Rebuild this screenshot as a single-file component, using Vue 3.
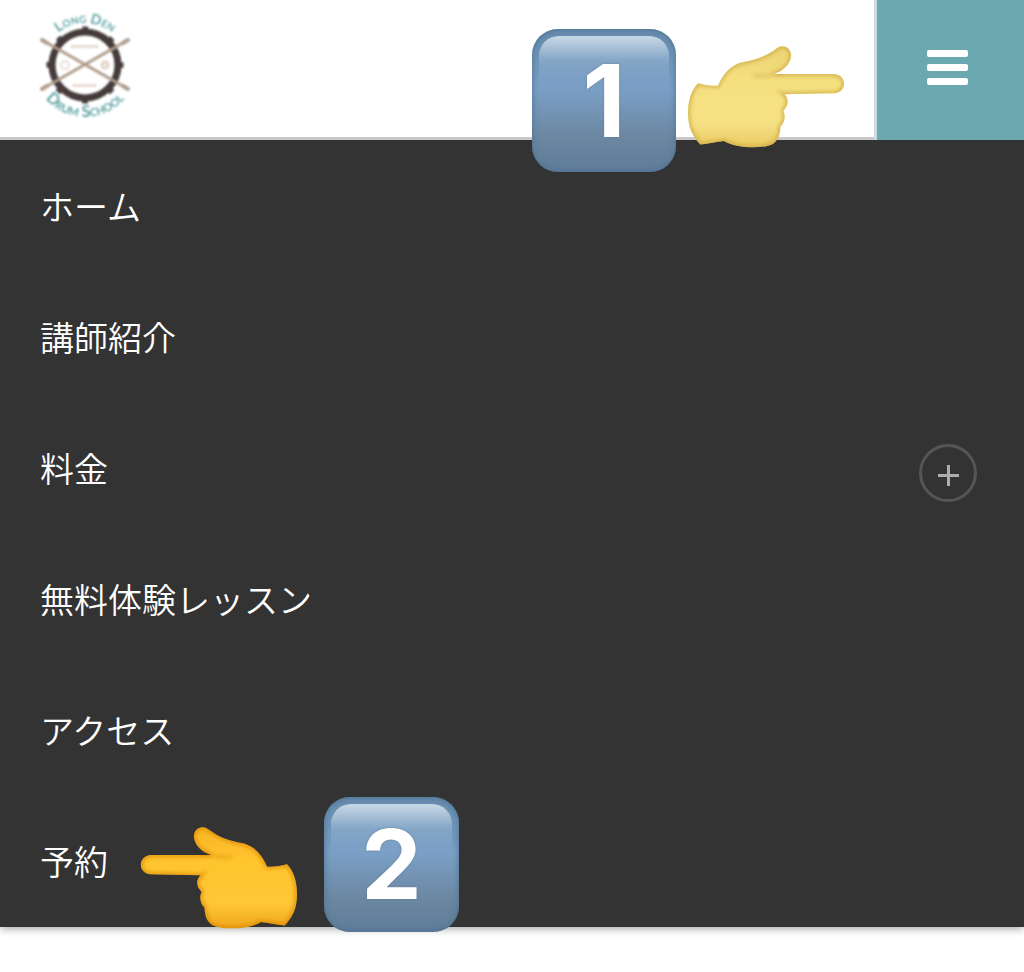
<template>
  <div class="page">
    <header class="header">
      <a class="logo" href="#" aria-label="Long Den Drum School">
        <svg viewBox="0 0 110 120" width="110" height="120">
          <defs>
            <path id="arc-top" d="M 13 65 A 42 42 0 0 1 97 65" />
            <path id="arc-bottom" d="M 3 65 A 52 52 0 0 0 107 65" />
          </defs>
          <text class="logo-text">
            <textPath href="#arc-top" startOffset="50%" text-anchor="middle">Long Den</textPath>
          </text>
          <text class="logo-text logo-text-bottom">
            <textPath href="#arc-bottom" startOffset="50%" text-anchor="middle">Drum School</textPath>
          </text>
          <circle cx="55" cy="65" r="33" fill="#fff" stroke="#453b3b" stroke-width="7" />
          <circle cx="55" cy="65" r="37" fill="none" stroke="#453b3b" stroke-width="3" stroke-dasharray="6 23.06" stroke-dashoffset="3" />
          <g stroke="#e3d2c5" fill="none">
            <path d="M41 46.500h27M43 85.500h23" stroke-width="3" stroke-dasharray="3 1" />
            <circle cx="35" cy="65" r="4" stroke-width="1.500" />
            <circle cx="75" cy="65" r="3" stroke-width="3" />
          </g>
          <path d="M12 40L98 89M98 40L12 89" stroke="#b09d8b" stroke-width="3" stroke-linecap="round" />
          <path d="M12 40l5 3M98 40l-5 3M12 89l5-3M98 89l-5-3" stroke="#b09d8b" stroke-width="4" stroke-linecap="round" />
        </svg>
      </a>
      <button class="menu-button" type="button" aria-label="メニュー" @click="open = !open">
        <span class="bar"></span>
        <span class="bar"></span>
        <span class="bar"></span>
      </button>
      <div class="step step-first">
        <span class="keycap">1</span>
        <svg class="hand" viewBox="40 45 472 312">
          <defs>
            <linearGradient id="pale" x1="0" y1="0" x2="0" y2="1">
              <stop offset="0" stop-color="#ecd273" />
              <stop offset="0.35" stop-color="#f5e080" />
              <stop offset="0.75" stop-color="#f6e285" />
              <stop offset="1" stop-color="#ebca62" />
            </linearGradient>
            <filter id="soft" x="-10%" y="-10%" width="120%" height="120%">
              <feGaussianBlur stdDeviation="6" />
            </filter>
            <clipPath id="hand-clip"><path :d="handPath" /></clipPath>
          </defs>
          <path :d="handPath" fill="url(#pale)" />
          <g clip-path="url(#hand-clip)">
            <g fill="none" stroke="#c9a43e" filter="url(#soft)">
              <path :d="handPath" stroke-width="9" />
              <path :d="creasePath" stroke-width="5" />
            </g>
          </g>
        </svg>
      </div>
    </header>

    <nav v-show="open" class="menu">
      <ul>
        <li v-for="item in items" :key="item.label">
          <a href="#">{{ item.label }}</a>
          <button v-if="item.children" class="expand" type="button" :aria-label="item.label + 'を開く'">
            <svg viewBox="0 0 21 21" width="21" height="21">
              <path d="M10.500 0v21M0 10.500h21" stroke="#adadad" stroke-width="3" />
            </svg>
          </button>
          <div v-if="item.step" class="step step-second">
            <svg class="hand" viewBox="40 45 472 312">
              <defs>
                <linearGradient id="gold" x1="0" y1="0" x2="0" y2="1">
                  <stop offset="0" stop-color="#f9b526" />
                  <stop offset="0.35" stop-color="#ffc52e" />
                  <stop offset="0.75" stop-color="#fec736" />
                  <stop offset="1" stop-color="#f0a71a" />
                </linearGradient>
              </defs>
              <g transform="translate(552 0) scale(-1 1)">
                <path :d="handPath" fill="url(#gold)" />
                <g clip-path="url(#hand-clip)">
                  <g fill="none" stroke="#d98500" filter="url(#soft)">
                    <path :d="handPath" stroke-width="9" />
                    <path :d="creasePath" stroke-width="5" />
                  </g>
                </g>
              </g>
            </svg>
            <span class="keycap keycap-small">{{ item.step }}</span>
          </div>
        </li>
      </ul>
    </nav>
  </div>
</template>

<script setup>
import { ref } from "vue";

const open = ref(true);

const items = [
  { label: "ホーム" },
  { label: "講師紹介" },
  { label: "料金", children: true },
  { label: "無料体験レッスン" },
  { label: "アクセス" },
  { label: "予約", step: "2" },
];

// 指差しの輪郭（右向き）
const handPath =
  "M70 160C90 166 108 168 130 167C146 130 168 106 200 97C245 90 275 78 305 56" +
  "C325 38 352 54 350 78C347 103 328 122 298 132L478 132C519 134 520 187 480 190" +
  "L330 193C344 206 343 228 327 242C334 258 331 278 318 290C317 315 311 332 295 342" +
  "C265 358 185 356 148 333C125 336 103 341 77 344C52 318 40 290 40 250C40 212 50 180 70 160Z";
const creasePath = "M235 137C258 139 280 137 302 131M330 193C322 190 316 185 312 180";
</script>

<style>
body {
  margin: 0;
  background-color: #fff;
}
</style>

<style scoped>
.page {
  min-height: 100vh;
  font-family: "Noto Sans CJK JP", sans-serif;
}

.header {
  position: relative;
  z-index: 1;
  display: flex;
  justify-content: space-between;
  height: 140px;
  box-sizing: border-box;
  background: linear-gradient(#c8c8c8, #c8c8c8) bottom / 100% 3px no-repeat #fff;
}

.logo {
  display: block;
  height: 120px;
  margin-left: 30px;
}

.logo svg {
  display: block;
  filter: blur(0.8px);
}

.logo-text {
  font-family: Lato, sans-serif;
  font-size: 14px;
  font-weight: 700;
  font-variant: small-caps;
  fill: #5fa3a3;
}

.logo-text-bottom {
  font-size: 16px;
}

.menu-button {
  display: flex;
  flex-direction: column;
  align-items: center;
  gap: 7px;
  width: 150px;
  height: 140px;
  padding: 50px 7px 0 0;
  box-sizing: border-box;
  border: none;
  border-left: 3px solid #cbdcde;
  background-color: #6ca8b0;
  cursor: pointer;
}

.bar {
  width: 41px;
  height: 7px;
  border-radius: 2px;
  background-color: #fff;
}

.menu {
  background-color: #333;
  box-shadow: 0 2px 8px rgba(0, 0, 0, 0.35);
}

.menu ul {
  margin: 0;
  padding: 0 0 1px;
  list-style: none;
}

.menu li {
  position: relative;
  display: flex;
  justify-content: space-between;
}

.menu a {
  flex: 1;
  padding-left: 40px;
  color: #fff;
  font-size: 34px;
  font-weight: 350;
  line-height: 131px;
  text-decoration: none;
}

.expand {
  display: flex;
  align-items: center;
  justify-content: center;
  width: 58px;
  height: 58px;
  margin: 42px 47px 0 0;
  padding: 4px 0 0;
  box-sizing: border-box;
  border: 3px solid #555;
  border-radius: 50%;
  background: none;
  cursor: pointer;
}

.step {
  position: absolute;
  display: flex;
  align-items: flex-start;
  pointer-events: none;
}

.step-first {
  top: 29px;
  right: 179px;
  gap: 12px;
}

.step-second {
  top: 2px;
  left: 140px;
  gap: 27px;
}

.hand {
  width: 157px;
  height: 104px;
}

.step-first .hand {
  margin-top: 16px;
}

.step-second .hand {
  margin-top: 29px;
}

.keycap {
  position: relative;
  z-index: 0;
  width: 144px;
  height: 143px;
  border-radius: 26px;
  background: linear-gradient(#668bad, #7a9fc6 42%, #6c87a2 75%, #5f7c98);
  box-shadow: inset 0 0 6px #4d708f;
  color: #fff;
  font-family: Inter, sans-serif;
  font-size: 100px;
  font-weight: 700;
  line-height: 143px;
  text-align: center;
  text-shadow: 0 0 2px #5f7890;
}

.keycap::before {
  content: "";
  position: absolute;
  z-index: -1;
  top: 7px;
  left: 7px;
  right: 7px;
  height: 50px;
  border-radius: 20px 20px 0 0;
  background: linear-gradient(rgba(218, 231, 240, 0.85), rgba(160, 190, 218, 0.4) 50%, rgba(120, 160, 200, 0));
}

.keycap-small {
  width: 135px;
  height: 135px;
  font-size: 96px;
  line-height: 135px;
}
</style>
